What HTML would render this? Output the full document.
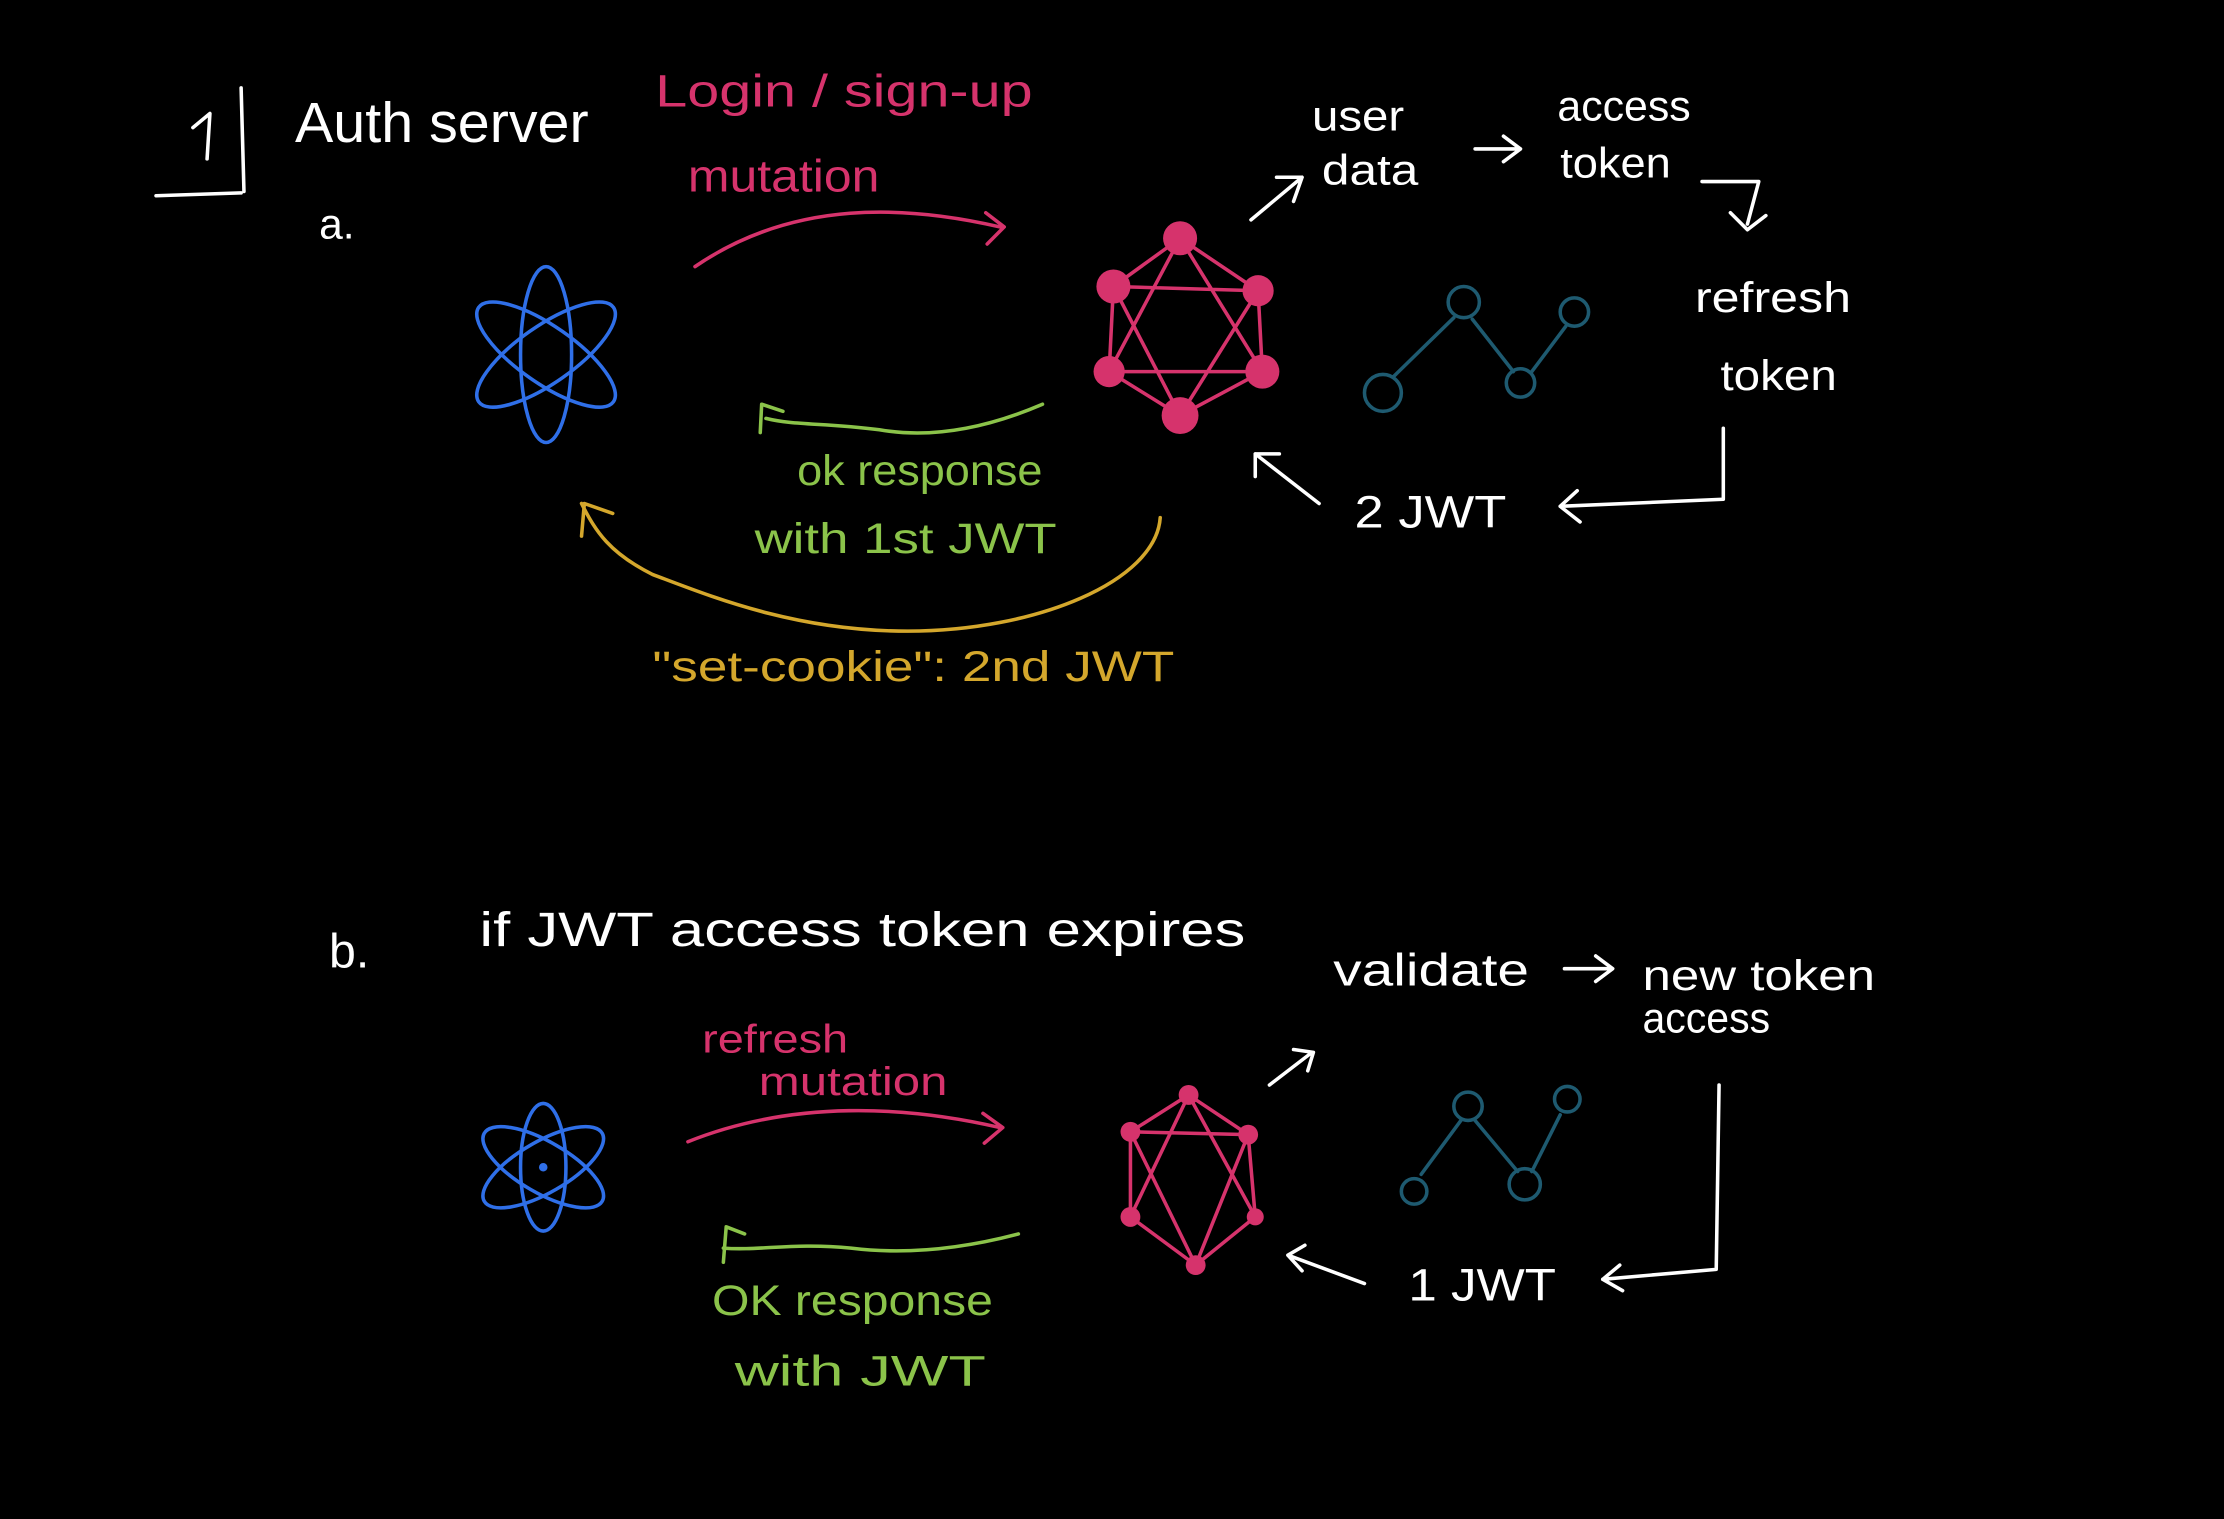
<!DOCTYPE html>
<html><head><meta charset="utf-8"><style>
html,body{margin:0;padding:0;background:#000;}
svg{display:block;}
text{font-family:"Liberation Sans",sans-serif;}
</style></head><body>
<svg width="2224" height="1519" viewBox="0 0 1568 1071" preserveAspectRatio="none" xmlns="http://www.w3.org/2000/svg">
<rect width="1568" height="1071" fill="#000"/>
<g fill="none" stroke-linecap="round" stroke-linejoin="round" stroke-width="2.5">
<path d="M170 62 L172 135 M110 138 L170 136" stroke="#fff"/>
<path d="M136 90 L148 80 L146 112" stroke="#fff"/>
<path d="M490 188 C560 140 640 145 705 160 M695 150 L708 160 L696 172" stroke="#d6336c"/>
<g stroke="#2f6fe8" transform="translate(385 250)">
<ellipse rx="58" ry="20" transform="rotate(35)"/>
<ellipse rx="58" ry="20" transform="rotate(-35)"/>
<ellipse rx="62" ry="18" transform="rotate(90)"/>
</g>
<g stroke="#d6336c">
<path d="M832 168 L887 205 L890 262 L832 293 L782 262 L785 202 Z M832 168 L782 262 L890 262 Z M785 202 L887 205 M785 202 L832 293 M887 205 L832 293"/>
</g>
<g fill="#d6336c"><circle cx="832" cy="168" r="12"/><circle cx="887" cy="205" r="11"/><circle cx="890" cy="262" r="12"/><circle cx="832" cy="293" r="13"/><circle cx="782" cy="262" r="11"/><circle cx="785" cy="202" r="12"/></g>
<path d="M882 155 L918 125 M900 125 L918 125 L912 142" stroke="#fff"/>
<path d="M1040 105 L1072 105 M1060 96 L1072 105 L1060 114" stroke="#fff"/>
<path d="M1200 128 L1240 128 L1232 158 M1220 150 L1232 162 L1245 152" stroke="#fff"/>
<path d="M1215 302 L1215 352 L1100 357 M1112 346 L1100 357 L1114 368" stroke="#fff"/>
<path d="M930 355 L885 320 M885 336 L885 320 L902 320" stroke="#fff"/>
<g stroke="#1e5a70"><path d="M982 266 L1025 224 M1038 225 L1067 262 M1080 262 L1104 230"/>
<circle cx="975" cy="277" r="13"/><circle cx="1032" cy="213" r="11"/><circle cx="1072" cy="270" r="10"/><circle cx="1110" cy="220" r="10"/></g>
<path d="M735 285 C700 300 660 310 620 303 C580 298 560 300 540 295 M536 305 L537 285 L552 290" stroke="#8bc34a"/>
<path d="M818 365 C815 410 730 445 640 445 C560 445 500 420 460 405 C430 390 420 375 410 355 M410 378 L412 355 L432 362" stroke="#d4a72c"/>
<path d="M485 805 C560 775 640 780 705 795 M693 785 L707 795 L694 806" stroke="#d6336c"/>
<g stroke="#2f6fe8" transform="translate(383 823)">
<ellipse rx="48" ry="18" transform="rotate(30)"/>
<ellipse rx="48" ry="18" transform="rotate(-30)"/>
<ellipse rx="45" ry="16" transform="rotate(90)"/>
</g>
<circle cx="383" cy="823" r="3" fill="#2f6fe8" stroke="none"/>
<path d="M838 772 L880 800 L885 858 L843 892 L797 858 L797 798 Z M797 798 L880 800 M797 798 L843 892 M880 800 L843 892 M838 772 L797 858 M838 772 L885 858" stroke="#d6336c"/>
<g fill="#d6336c"><circle cx="838" cy="772" r="7"/><circle cx="880" cy="800" r="7"/><circle cx="885" cy="858" r="6"/><circle cx="843" cy="892" r="7"/><circle cx="797" cy="858" r="7"/><circle cx="797" cy="798" r="7"/></g>
<path d="M895 765 L925 742 M912 740 L926 742 L922 755" stroke="#fff"/>
<path d="M1103 683 L1136 683 M1125 674 L1137 683 L1125 692" stroke="#fff"/>
<g stroke="#1e5a70"><path d="M1002 828 L1030 790 M1040 790 L1070 826 M1080 826 L1100 786"/>
<circle cx="997" cy="840" r="9"/><circle cx="1035" cy="780" r="10"/><circle cx="1075" cy="835" r="11"/><circle cx="1105" cy="775" r="9"/></g>
<path d="M1212 765 L1210 895 L1130 902 M1142 892 L1130 902 L1144 910" stroke="#fff"/>
<path d="M962 905 L908 885 M920 878 L908 885 L918 896" stroke="#fff"/>
<path d="M718 870 C680 880 640 885 600 880 C560 876 535 882 510 880 M510 890 L512 865 L525 870" stroke="#8bc34a"/>
</g>
<g fill="#fff" font-size="40" lengthAdjust="spacingAndGlyphs">
<text x="208" y="100" textLength="207" lengthAdjust="spacingAndGlyphs">Auth server</text>
<text x="225" y="168" font-size="30">a.</text>
<text x="925" y="92" font-size="30" textLength="65" lengthAdjust="spacingAndGlyphs">user</text>
<text x="932" y="130" font-size="30" textLength="68" lengthAdjust="spacingAndGlyphs">data</text>
<text x="1098" y="85" font-size="30" textLength="94" lengthAdjust="spacingAndGlyphs">access</text>
<text x="1100" y="125" font-size="30" textLength="78" lengthAdjust="spacingAndGlyphs">token</text>
<text x="1195" y="220" font-size="30" textLength="110" lengthAdjust="spacingAndGlyphs">refresh</text>
<text x="1213" y="275" font-size="30" textLength="82" lengthAdjust="spacingAndGlyphs">token</text>
<text x="955" y="372" font-size="32" textLength="107" lengthAdjust="spacingAndGlyphs">2 JWT</text>
<text x="232" y="682" font-size="34">b.</text>
<text x="338" y="667" font-size="34" textLength="540" lengthAdjust="spacingAndGlyphs">if JWT access token expires</text>
<text x="940" y="695" font-size="32" textLength="138" lengthAdjust="spacingAndGlyphs">validate</text>
<text x="1158" y="698" font-size="30" textLength="164" lengthAdjust="spacingAndGlyphs">new token</text>
<text x="1158" y="728" font-size="30" textLength="90" lengthAdjust="spacingAndGlyphs">access</text>
<text x="993" y="917" font-size="32" textLength="104" lengthAdjust="spacingAndGlyphs">1 JWT</text>
</g>
<g fill="#d6336c" font-size="32">
<text x="462" y="75" textLength="266" lengthAdjust="spacingAndGlyphs">Login / sign-up</text>
<text x="485" y="135" textLength="135" lengthAdjust="spacingAndGlyphs">mutation</text>
<text x="495" y="742" font-size="28" textLength="103" lengthAdjust="spacingAndGlyphs">refresh</text>
<text x="535" y="772" font-size="28" textLength="133" lengthAdjust="spacingAndGlyphs">mutation</text>
</g>
<g fill="#8bc34a" font-size="30">
<text x="562" y="342" textLength="173" lengthAdjust="spacingAndGlyphs">ok response</text>
<text x="532" y="390" textLength="213" lengthAdjust="spacingAndGlyphs">with 1st JWT</text>
<text x="502" y="927" textLength="198" lengthAdjust="spacingAndGlyphs">OK response</text>
<text x="518" y="977" textLength="177" lengthAdjust="spacingAndGlyphs">with JWT</text>
</g>
<text x="460" y="480" fill="#d4a72c" font-size="30" textLength="368" lengthAdjust="spacingAndGlyphs">"set-cookie": 2nd JWT</text>
</svg>
</body></html>
